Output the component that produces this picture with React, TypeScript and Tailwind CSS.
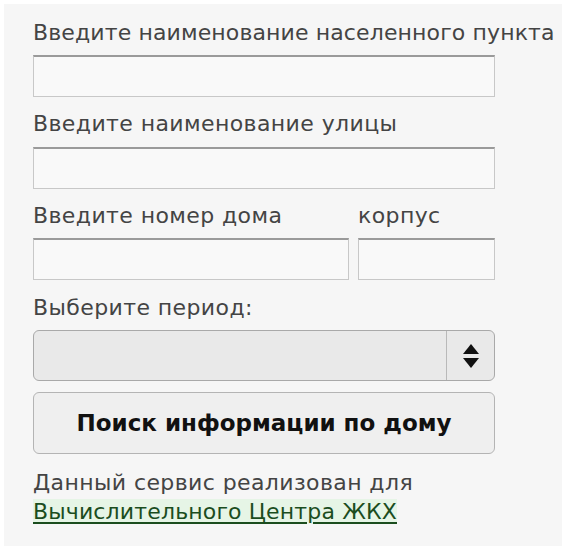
export default function App() {
  const label = "h-[24px] text-[22px] leading-[24px] tracking-[0.4px] text-[#444] whitespace-nowrap";
  const input = "h-[42px] bg-[#f9f9f9] border border-[#c8c8c8] border-t-[#9a9a9a] border-t-2";
  return (
    <div className="w-[572px] h-[554px] bg-white p-[4px]" style={{ fontFamily: '"DejaVu Sans", "Open Sans", sans-serif' }}>
      <div className="w-[558px] h-[542px] bg-[#f6f6f6] pl-[29px] pt-[17px]">
        <div className="w-[462px] flex flex-col">
          <div className={`${label} tracking-[0.12px]`}>Введите наименование населенного пункта</div>
          <div className={`${input} mt-[10px]`} />
          <div className={`${label} mt-[15px]`}>Введите наименование улицы</div>
          <div className={`${input} mt-[11px]`} />
          <div className="flex gap-[9px] mt-[15px]">
            <div className="w-[316px] flex flex-col">
              <div className={label}>Введите номер дома</div>
              <div className={`${input} mt-[10px]`} />
            </div>
            <div className="flex-1 flex flex-col">
              <div className={label}>корпус</div>
              <div className={`${input} mt-[10px]`} />
            </div>
          </div>
          <div className={`${label} mt-[16px]`}>Выберите период:</div>
          <div className="mt-[10px] h-[51px] rounded-[6px] border border-[#a9a9a9] bg-[#e9e9e9] flex">
            <div className="flex-1" />
            <div className="w-[48px] border-l border-[#b9b9b9] flex items-center justify-center">
              <svg width="18" height="30" viewBox="0 0 18 30">
                <path d="M9 3 L17 13 L1 13 Z" fill="#111" />
                <path d="M1 17 L17 17 L9 27 Z" fill="#111" />
              </svg>
            </div>
          </div>
          <div className="mt-[11px] h-[62px] rounded-[6px] border border-[#b4b4b4] bg-[#efefef] flex items-center justify-center">
            <span className="text-[23px] font-bold text-[#111]">Поиск информации по дому</span>
          </div>
          <div className={`${label} mt-[17px]`}>Данный сервис реализован для</div>
          <div className="mt-[5px] h-[24px] leading-[24px] whitespace-nowrap">
            <span className="text-[22px] tracking-[0.15px] text-[#1b4d1e] underline underline-offset-[3px] bg-[#e6f5e6]">Вычислительного Центра ЖКХ</span>
          </div>
        </div>
      </div>
    </div>
  );
}
